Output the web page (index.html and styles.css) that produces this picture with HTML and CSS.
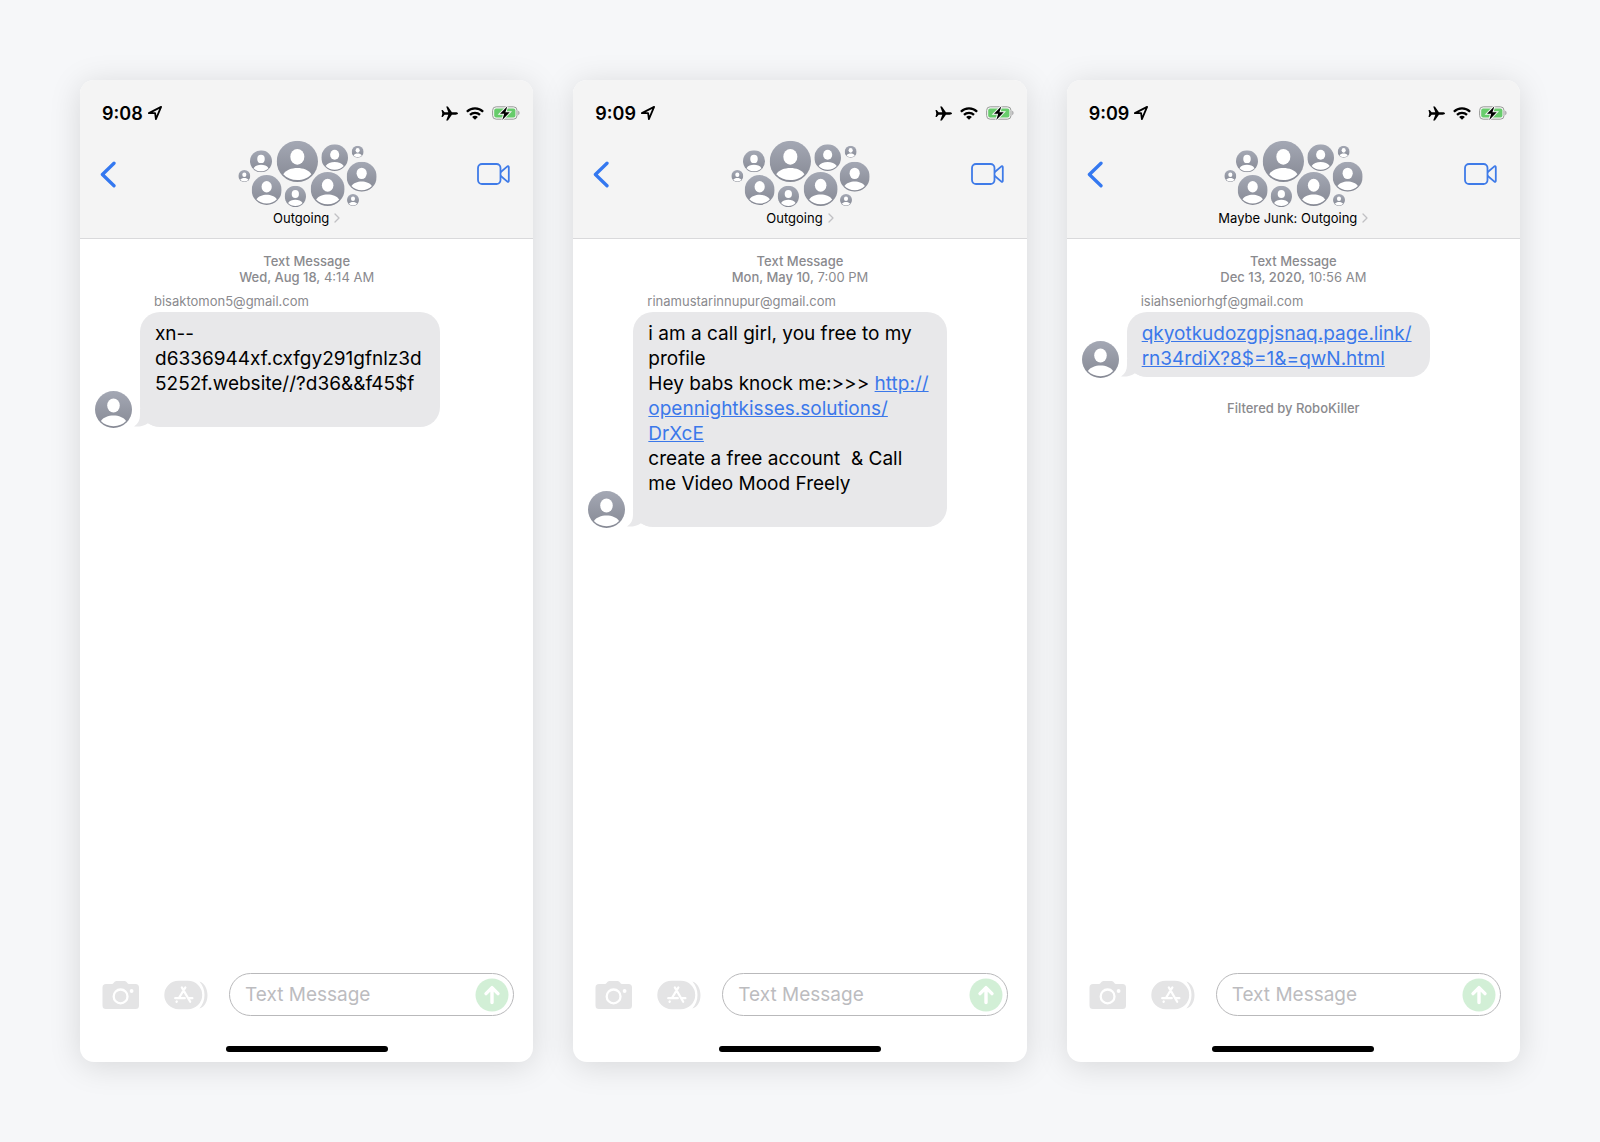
FILE: index.html
```html
<!DOCTYPE html>
<html lang="en">
<head>
    <meta charset="UTF-8">
    <meta name="viewport" content="width=device-width, initial-scale=1.0">
    <title>Messages</title>
    <link rel="stylesheet" href="styles.css">
</head>
<body>
    <!-- Shared icons -->
    <svg class="sprite" aria-hidden="true">
        <defs>
            <linearGradient id="avatar-fill" x1="0" y1="0" x2="0" y2="1">
                <stop offset="0" stop-color="#a4a8b4"/>
                <stop offset="1" stop-color="#868994"/>
            </linearGradient>
            <symbol id="avatar" viewBox="0 0 100 100">
                <circle cx="50" cy="50" r="50" fill="url(#avatar-fill)"/>
                <ellipse cx="50" cy="39" rx="17" ry="19" fill="#fff"/>
                <path fill="#fff" d="M16 81C22 71 36 66 50 66S78 71 84 81C76 90 64 95 50 95S24 90 16 81Z"/>
            </symbol>
            <symbol id="cluster" viewBox="54 30 420 204">
                <use href="#avatar" x="55" y="120" width="36" height="36"/>
                <use href="#avatar" x="90" y="61" width="66" height="66"/>
                <use href="#avatar" x="170" y="32" width="124" height="124"/>
                <use href="#avatar" x="304" y="43" width="80" height="80"/>
                <use href="#avatar" x="395" y="47" width="36" height="36"/>
                <use href="#avatar" x="95" y="135" width="90" height="90"/>
                <use href="#avatar" x="194" y="167" width="64" height="64"/>
                <use href="#avatar" x="272" y="126" width="102" height="102"/>
                <use href="#avatar" x="380" y="95" width="90" height="90"/>
                <use href="#avatar" x="381" y="192" width="36" height="36"/>
            </symbol>
            <symbol id="location" viewBox="0 0 14 14">
                <path fill="none" stroke="#000" stroke-width="1.8" stroke-linejoin="round" d="M.9 7.1L13.1.9 7.9 13.1 7.1 7.2Z"/>
            </symbol>
            <symbol id="plane" viewBox="0 0 17 15">
                <path d="M17 7.5C17 8.2 15.8 8.7 14.6 8.7H10.9L6.9 14.6H5.2L7.3 8.7H3.6L1.7 10.9H.5L1.3 7.5.5 4.1H1.7L3.6 6.3H7.3L5.2.4H6.9L10.9 6.3H14.6C15.8 6.3 17 6.8 17 7.5Z"/>
            </symbol>
            <symbol id="wifi" viewBox="0 0 18 13">
                <path fill="none" stroke="#000" stroke-width="2.3" d="M.9 4.7C5.4.2 12.6.2 17.1 4.7M4 7.9C6.8 5.2 11.2 5.2 14 7.9"/>
                <path d="M9 12.8L6.1 9.9C7.7 8.4 10.3 8.4 11.9 9.9Z"/>
            </symbol>
            <symbol id="battery" viewBox="0 0 28 14">
                <rect x=".6" y=".8" width="24.4" height="12.4" rx="3.6" fill="none" stroke="#999b99" stroke-width="1"/>
                <rect x="2.2" y="2.4" width="21.2" height="9.2" rx="2" fill="#68cc6c"/>
                <path fill="#a5a5a7" d="M26.2 4.8C28 5.4 28 8.6 26.2 9.2Z"/>
                <path stroke="#f4f4f4" stroke-width="2" paint-order="stroke" d="M15.4.2L8 7.8H12.2L10.3 13.9 17.7 6.2H13.4Z"/>
            </symbol>
            <symbol id="back" viewBox="0 0 16 27">
                <path fill="none" stroke="#3478f0" stroke-width="3.3" stroke-linecap="round" stroke-linejoin="round" d="M14 2.2L2.4 13.5 14 24.8"/>
            </symbol>
            <symbol id="video" viewBox="0 0 33 22">
                <g fill="none" stroke="#3f7be8" stroke-width="1.8" stroke-linejoin="round">
                    <rect x="1" y="1" width="22.5" height="20" rx="4"/>
                    <path d="M23.5 9.2L30.4 3.4Q31.8 2.6 31.8 4.2V17.8Q31.8 19.4 30.4 18.6L23.5 12.8"/>
                </g>
            </symbol>
            <symbol id="chevron" viewBox="0 0 6 10">
                <path fill="none" stroke="#c0c0c3" stroke-width="1.3" stroke-linecap="round" stroke-linejoin="round" d="M1 1L5 5 1 9"/>
            </symbol>
            <symbol id="tail" viewBox="0 0 20 18">
                <path fill="#e8e8ea" d="M6 0V6C6 11 4 15 0 17.4 5 18 10 17 14 14.2L20 17V0Z"/>
            </symbol>
            <symbol id="camera" viewBox="0 0 38 30">
                <path fill="#e4e4e5" d="M4 4H10.2C11.8 4 12 1 14.5 1H22.5C25 1 25.2 4 26.8 4H33.5Q37 4 37 7.5V25.5Q37 29 33.5 29H4Q.5 29 .5 25.5V7.5Q.5 4 4 4Z"/>
                <circle cx="18.6" cy="16.4" r="6.9" fill="none" stroke="#fff" stroke-width="2.3"/>
                <circle cx="29.6" cy="11" r="1.9" fill="#fff"/>
            </symbol>
            <symbol id="apps" viewBox="0 0 44 30">
                <path fill="#e4e4e5" d="M14.5.8H24A14.2 14.2 0 0 1 24 29.2H14.5A14.2 14.2 0 0 1 14.5.8ZM35.4 1.6C46.2 5 46.2 25.5 35.4 28.6 42.2 21 42.2 9 35.4 1.6Z"/>
                <g fill="none" stroke="#fff" stroke-width="2.2" stroke-linecap="round">
                    <path d="M17.8 7.4L26.2 21.8M21.4 7.4L14.8 18.2M11.2 18.2H20.8M25 18.2H28.4M12.8 21.4L12.5 21.9"/>
                </g>
            </symbol>
            <symbol id="send" viewBox="0 0 34 34">
                <circle cx="17" cy="17" r="16.5" fill="#d2efd6"/>
                <path fill="none" stroke="#fff" stroke-width="3.4" stroke-linecap="round" stroke-linejoin="round" d="M17 24.5V10M11 15.6L17 9.6 23 15.6"/>
            </symbol>
        </defs>
    </svg>

    <main class="gallery">
        <section class="phone">
            <header class="header">
                <div class="status">
                    <span class="time">9:08</span>
                    <svg class="icon-location"><use href="#location"/></svg>
                    <div class="status-icons">
                        <svg class="icon-plane"><use href="#plane"/></svg>
                        <svg class="icon-wifi"><use href="#wifi"/></svg>
                        <svg class="icon-battery"><use href="#battery"/></svg>
                    </div>
                </div>
                <div class="nav">
                    <button type="button" class="back" aria-label="Back"><svg><use href="#back"/></svg></button>
                    <svg class="cluster"><use href="#cluster"/></svg>
                    <button type="button" class="video" aria-label="Video call"><svg><use href="#video"/></svg></button>
                </div>
                <button type="button" class="contact">Outgoing <svg><use href="#chevron"/></svg></button>
            </header>
            <div class="thread">
                <p class="stamp"><b>Text Message</b><br><b>Wed, Aug 18,</b> 4:14 AM</p>
                <p class="sender">bisaktomon5@gmail.com</p>
                <div class="message">
                    <svg class="avatar"><use href="#avatar"/></svg>
                    <div class="bubble">
                        <svg class="tail"><use href="#tail"/></svg>
                        xn--<br>d6336944xf.cxfgy291gfnlz3d<br>5252f.website//?d36&amp;&amp;f45$f<br>&nbsp;
                    </div>
                </div>
            </div>
            <form class="composer">
                <button type="button" class="camera" aria-label="Camera"><svg><use href="#camera"/></svg></button>
                <button type="button" class="apps" aria-label="Apps"><svg><use href="#apps"/></svg></button>
                <div class="field">
                    <input type="text" placeholder="Text Message" aria-label="Text Message">
                    <button type="button" class="send" aria-label="Send"><svg><use href="#send"/></svg></button>
                </div>
            </form>
            <div class="home-bar"></div>
        </section>

        <section class="phone">
            <header class="header">
                <div class="status">
                    <span class="time">9:09</span>
                    <svg class="icon-location"><use href="#location"/></svg>
                    <div class="status-icons">
                        <svg class="icon-plane"><use href="#plane"/></svg>
                        <svg class="icon-wifi"><use href="#wifi"/></svg>
                        <svg class="icon-battery"><use href="#battery"/></svg>
                    </div>
                </div>
                <div class="nav">
                    <button type="button" class="back" aria-label="Back"><svg><use href="#back"/></svg></button>
                    <svg class="cluster"><use href="#cluster"/></svg>
                    <button type="button" class="video" aria-label="Video call"><svg><use href="#video"/></svg></button>
                </div>
                <button type="button" class="contact">Outgoing <svg><use href="#chevron"/></svg></button>
            </header>
            <div class="thread">
                <p class="stamp"><b>Text Message</b><br><b>Mon, May 10,</b> 7:00 PM</p>
                <p class="sender">rinamustarinnupur@gmail.com</p>
                <div class="message">
                    <svg class="avatar"><use href="#avatar"/></svg>
                    <div class="bubble">
                        <svg class="tail"><use href="#tail"/></svg>
                        i am a call girl, you free to my<br>profile<br>Hey babs knock me:&gt;&gt;&gt; <a href="#">http://<br>opennightkisses.solutions/<br>DrXcE</a><br>create a free account &nbsp;&amp; Call<br>me Video Mood Freely<br>&nbsp;
                    </div>
                </div>
            </div>
            <form class="composer">
                <button type="button" class="camera" aria-label="Camera"><svg><use href="#camera"/></svg></button>
                <button type="button" class="apps" aria-label="Apps"><svg><use href="#apps"/></svg></button>
                <div class="field">
                    <input type="text" placeholder="Text Message" aria-label="Text Message">
                    <button type="button" class="send" aria-label="Send"><svg><use href="#send"/></svg></button>
                </div>
            </form>
            <div class="home-bar"></div>
        </section>

        <section class="phone">
            <header class="header">
                <div class="status">
                    <span class="time">9:09</span>
                    <svg class="icon-location"><use href="#location"/></svg>
                    <div class="status-icons">
                        <svg class="icon-plane"><use href="#plane"/></svg>
                        <svg class="icon-wifi"><use href="#wifi"/></svg>
                        <svg class="icon-battery"><use href="#battery"/></svg>
                    </div>
                </div>
                <div class="nav">
                    <button type="button" class="back" aria-label="Back"><svg><use href="#back"/></svg></button>
                    <svg class="cluster"><use href="#cluster"/></svg>
                    <button type="button" class="video" aria-label="Video call"><svg><use href="#video"/></svg></button>
                </div>
                <button type="button" class="contact">Maybe Junk: Outgoing <svg><use href="#chevron"/></svg></button>
            </header>
            <div class="thread">
                <p class="stamp"><b>Text Message</b><br><b>Dec 13, 2020,</b> 10:56 AM</p>
                <p class="sender">isiahseniorhgf@gmail.com</p>
                <div class="message">
                    <svg class="avatar"><use href="#avatar"/></svg>
                    <div class="bubble">
                        <svg class="tail"><use href="#tail"/></svg>
                        <a href="#">qkyotkudozgpjsnaq.page.link/<br>rn34rdiX?8$=1&amp;=qwN.html</a>
                    </div>
                </div>
                <p class="filtered">Filtered by RoboKiller</p>
            </div>
            <form class="composer">
                <button type="button" class="camera" aria-label="Camera"><svg><use href="#camera"/></svg></button>
                <button type="button" class="apps" aria-label="Apps"><svg><use href="#apps"/></svg></button>
                <div class="field">
                    <input type="text" placeholder="Text Message" aria-label="Text Message">
                    <button type="button" class="send" aria-label="Send"><svg><use href="#send"/></svg></button>
                </div>
            </form>
            <div class="home-bar"></div>
        </section>
    </main>
</body>
</html>
```
FILE: styles.css
```css
* {
    box-sizing: border-box;
}
body {
    margin: 0;
    background-color: #f6f7f9;
    font-family: Inter, "Liberation Sans", sans-serif;
    color: #000;
}
p {
    margin: 0;
}
svg {
    display: block;
}
button {
    flex: none;
    padding: 0;
    border: none;
    background: none;
    font-family: inherit;
    color: inherit;
    cursor: pointer;
}
.sprite {
    position: absolute;
    width: 0;
    height: 0;
}
.gallery {
    display: grid;
    grid-template-columns: repeat(3, 1fr);
    gap: 40px;
    min-height: 100vh;
    padding: 80px;
}
.phone {
    display: flex;
    flex-direction: column;
    min-width: 0;
    overflow: hidden;
    border-radius: 14px;
    background: #fff;
    box-shadow: 0 4px 32px rgba(0, 0, 0, 0.13);
}

/* Header */
.header {
    display: flex;
    flex-direction: column;
    height: 159px;
    padding-top: 21px;
    border-bottom: 1px solid #d9d9db;
    background: #f4f4f4;
}
.status {
    display: flex;
    align-items: center;
    height: 24px;
    padding: 0 13px 0 22px;
}
.time {
    margin-right: 5px;
    font-size: 18px;
    font-weight: 600;
}
.icon-location {
    width: 14px;
    height: 14px;
}
.status-icons {
    display: flex;
    align-items: center;
    gap: 8px;
    margin-left: auto;
}
.icon-plane {
    width: 17px;
    height: 15px;
}
.icon-wifi {
    width: 18px;
    height: 13px;
}
.icon-battery {
    width: 28px;
    height: 14px;
}
.nav {
    display: flex;
    align-items: center;
    justify-content: space-between;
    height: 68px;
    margin-top: 15px;
    padding: 0 23px 0 20px;
}
.back svg {
    width: 16px;
    height: 27px;
}
.cluster {
    width: 140px;
    height: 68px;
    margin-left: 22px;
}
.video svg {
    width: 33px;
    height: 22px;
}
.contact {
    display: flex;
    align-items: center;
    align-self: center;
    gap: 5px;
    height: 20px;
    font-size: 13px;
}
.contact svg {
    width: 6px;
    height: 10px;
}

/* Conversation */
.thread {
    flex: 1;
    padding: 14px 15px;
}
.stamp,
.filtered {
    font-size: 13px;
    line-height: 16px;
    text-align: center;
    color: #8a8a8e;
}
.stamp b,
.filtered {
    font-weight: 500;
}
.sender {
    margin-top: 7px;
    padding-left: 59px;
    font-size: 13px;
    line-height: 18px;
    color: #8a8a8e;
}
.message {
    display: flex;
    align-items: flex-end;
    gap: 8px;
    margin-top: 2px;
}
.avatar {
    flex: none;
    width: 37px;
    height: 37px;
    margin-bottom: -1px;
}
.bubble {
    position: relative;
    padding: 9px 18px 6px 15px;
    border-radius: 20px;
    background: #e8e8ea;
    font-size: 19px;
    line-height: 25px;
    white-space: nowrap;
}
.tail {
    position: absolute;
    left: -6px;
    bottom: 0;
    width: 20px;
    height: 18px;
}
.bubble a {
    position: relative;
    color: #3b78ea;
    text-decoration: underline;
}
.filtered {
    margin-top: 23px;
}

/* Message box */
.composer {
    display: flex;
    align-items: center;
    padding: 0 19px 0 22px;
}
.camera svg {
    width: 38px;
    height: 30px;
}
.apps {
    margin: 0 21px 0 24px;
}
.apps svg {
    width: 44px;
    height: 30px;
}
.field {
    display: flex;
    flex: 1;
    align-items: center;
    min-width: 0;
    height: 43px;
    padding: 0 4px 0 15px;
    border: 1px solid #b9b9bb;
    border-radius: 22px;
}
.field input {
    flex: 1;
    width: 100%;
    min-width: 0;
    padding: 0;
    border: none;
    outline: none;
    background: none;
    font-family: inherit;
    font-size: 19px;
}
.field input::placeholder {
    color: #bcbcbf;
}
.send svg {
    width: 34px;
    height: 34px;
}
.home-bar {
    width: 162px;
    height: 6px;
    margin: 30px auto 10px;
    border-radius: 3px;
    background: #000;
}
```
